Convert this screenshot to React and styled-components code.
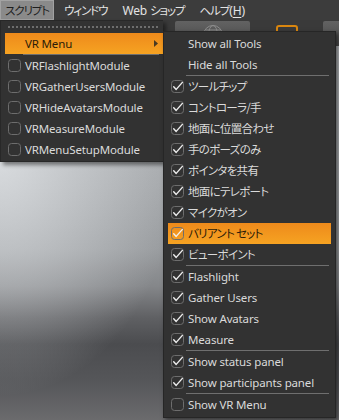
import React from "react";
import styled, { createGlobalStyle } from "styled-components";

const GlobalStyle = createGlobalStyle`
  html, body {
    margin: 0;
    padding: 0;
    background: #3a3a3a;
  }
  body {
    font-family: "Noto Sans", "Noto Sans CJK JP", sans-serif;
    font-size: 11.5px;
    letter-spacing: -0.15px;
  }
`;

const modules = [
  "VRFlashlightModule",
  "VRGatherUsersModule",
  "VRHideAvatarsModule",
  "VRMeasureModule",
  "VRMenuSetupModule",
];

// groups of the VR Menu submenu, a separator is drawn between groups
const toolGroups = [
  [
    { label: "Show all Tools" },
    { label: "Hide all Tools" },
  ],
  [
    { label: "ツールチップ", checked: true, jp: true },
    { label: "コントローラ/手", checked: true, jp: true },
    { label: "地面に位置合わせ", checked: true, jp: true },
    { label: "手のポーズのみ", checked: true, jp: true },
    { label: "ポインタを共有", checked: true, jp: true },
    { label: "地面にテレポート", checked: true, jp: true },
    { label: "マイクがオン", checked: true, jp: true },
    { label: "バリアント セット", checked: true, jp: true, hot: true },
    { label: "ビューポイント", checked: true, jp: true },
  ],
  [
    { label: "Flashlight", checked: true },
    { label: "Gather Users", checked: true },
    { label: "Show Avatars", checked: true },
    { label: "Measure", checked: true },
  ],
  [
    { label: "Show status panel", checked: true },
    { label: "Show participants panel", checked: true },
  ],
  [
    { label: "Show VR Menu", checked: false },
  ],
];

function Checkbox({ checked }) {
  return (
    <svg width="13" height="13" viewBox="0 0 13 13">
      <rect x="0.5" y="0.5" width="12" height="12" rx="3" fill="none" stroke="#6d6d6d" />
      {checked && (
        <path d="M2.7 6.7 L5.2 9.4 L11.4 2.4" fill="none" stroke="#f0f0f0" strokeWidth="1.4" strokeLinecap="round" strokeLinejoin="round" />
      )}
    </svg>
  );
}

function MenuItem({ label, checked, hot, arrow, right, jp }) {
  return (
    <Row $hot={hot} $right={right}>
      <Mark>{checked !== undefined && <Checkbox checked={checked} />}</Mark>
      <Label $jp={jp}>{label}</Label>
      {arrow && (
        <svg width="4" height="7" viewBox="0 0 4 7">
          <path d="M0 0 L4 3.5 L0 7 Z" fill="#4a3a22" />
        </svg>
      )}
    </Row>
  );
}

export default function App() {
  return (
    <Screen>
      <GlobalStyle />
      <MenuBar>
        <MenuTitle $active><Jp>スクリプト</Jp></MenuTitle>
        <MenuTitle><Jp>ウィンドウ</Jp></MenuTitle>
        <MenuTitle>Web&nbsp;<Jp>ショップ</Jp></MenuTitle>
        <MenuTitle><Jp>ヘルプ</Jp>(<u>H</u>)</MenuTitle>
      </MenuBar>

      <Toolbar>
        <ToolButton $width={75}>
          <svg width="22" height="22" viewBox="0 0 22 22">
            <g fill="none" stroke="#8c8c8c" strokeWidth="1">
              <circle cx="11" cy="11" r="9.5" />
              <ellipse cx="11" cy="11" rx="4.5" ry="9.5" />
              <path d="M1.5 11 H20.5 M3.5 6 H18.5 M3.5 16 H18.5" />
            </g>
          </svg>
        </ToolButton>
        <ToolSlot $width={73}>
          <OrangeTool />
        </ToolSlot>
        <ToolButton $width={30} />
      </Toolbar>

      <Viewport />

      <ScriptMenu>
        <TearOff />
        <MenuItem label="VR Menu" hot arrow />
        <Separator $left={22} $right={4} />
        {modules.map((m) => (
          <MenuItem key={m} label={m} checked={false} />
        ))}
      </ScriptMenu>

      <SubMenu>
        {toolGroups.map((group, i) => (
          <React.Fragment key={i}>
            {i > 0 && <Separator $left={22} $right={6} />}
            {group.map((item) => (
              <MenuItem key={item.label} {...item} right={4} />
            ))}
          </React.Fragment>
        ))}
      </SubMenu>
    </Screen>
  );
}

const Screen = styled.div`
  position: relative;
  width: 339px;
  height: 420px;
  overflow: hidden;
  display: flex;
  flex-direction: column;
`;

const Jp = styled.span`
  font-family: "Noto Sans CJK JP", sans-serif;
  font-size: 11.5px;
  letter-spacing: -1.1px;
  font-feature-settings: "palt";
`;

const MenuBar = styled.div`
  height: 20px;
  flex: none;
  display: flex;
  align-items: stretch;
  background: #3c3c3c;
  font-size: 12px;
`;

const MenuTitle = styled.div`
  display: flex;
  align-items: center;
  padding: 0 5px;
  margin-right: 5px;
  white-space: nowrap;
  color: ${(p) => (p.$active ? "#1e1e1e" : "#e4e4e4")};
  background: ${(p) => (p.$active ? "#8a8a8a" : "transparent")};
  box-shadow: ${(p) => (p.$active ? "inset 0 0 0 1px #a2a2a2" : "none")};

  u {
    text-underline-offset: 2px;
  }
`;

const Toolbar = styled.div`
  height: 26px;
  flex: none;
  display: flex;
  align-items: stretch;
  padding: 1px 0 0 175px;
  box-sizing: border-box;
  background: #3a3a3a;
`;

const ToolButton = styled.div`
  width: ${(p) => p.$width}px;
  flex: none;
  display: flex;
  justify-content: center;
  padding-top: 3px;
  box-sizing: border-box;
  border-radius: 2px;
  background: linear-gradient(#626262, #4a4a4a);
`;

const ToolSlot = styled.div`
  width: ${(p) => p.$width}px;
  flex: none;
  display: flex;
  justify-content: center;
  padding-top: 4px;
  box-sizing: border-box;
`;

const OrangeTool = styled.div`
  width: 22px;
  height: 18px;
  box-sizing: border-box;
  border: 2px solid #d9860f;
  border-radius: 3px;
`;

const Viewport = styled.div`
  flex: 1;
  background:
    radial-gradient(ellipse 180px 240px at 0px 110px, rgba(236, 239, 242, 0.72), rgba(236, 239, 242, 0) 100%),
    linear-gradient(
      180deg,
      #b0b3b6 0px,
      #a7aaad 114px,
      #989b9e 204px,
      #85878a 240px,
      #5f6063 272px,
      #4b4c4f 298px,
      #555659 334px,
      #6b6b6d 374px
    );
`;

const ScriptMenu = styled.div`
  position: absolute;
  top: 20px;
  left: 0;
  width: 163px;
  box-sizing: border-box;
  padding-bottom: 1px;
  border: 1px solid #282828;
  border-right: none;
  background: #323232;
  box-shadow: 3px 3px 4px rgba(0, 0, 0, 0.45);
`;

const TearOff = styled.div`
  height: 2px;
  margin: 5px 4px 5px 7px;
  background: repeating-linear-gradient(to right, #6e6e6e 0 2px, transparent 2px 4px);
`;

const SubMenu = styled.div`
  position: absolute;
  top: 31px;
  left: 163px;
  width: 173px;
  box-sizing: border-box;
  padding: 1px 0 2px;
  border: 1px solid #262626;
  background: #323232;
  box-shadow: 2px 2px 4px rgba(0, 0, 0, 0.5);
`;

const Row = styled.div`
  height: 21px;
  margin: 0 ${(p) => p.$right || 0}px 0 4px;
  padding: 0 5px 0 3px;
  display: grid;
  grid-template-columns: 17px 1fr auto;
  align-items: center;
  white-space: nowrap;
  color: ${(p) => (p.$hot ? "#2b1c08" : "#dadada")};
  background: ${(p) => (p.$hot ? "linear-gradient(#ee8a1b, #f6a322)" : "transparent")};
`;

const Mark = styled.span`
  display: flex;
  align-items: center;
  height: 13px;
`;

const Label = styled.span`
  line-height: 21px;
  ${(p) =>
    p.$jp &&
    `font-family: "Noto Sans CJK JP", sans-serif;
     font-size: 11.5px;
     letter-spacing: -0.7px;
     font-feature-settings: "palt";`}
`;

const Separator = styled.div`
  height: 1px;
  margin: 0 ${(p) => p.$right}px 0 ${(p) => p.$left}px;
  background: #6f6f6f;
`;
